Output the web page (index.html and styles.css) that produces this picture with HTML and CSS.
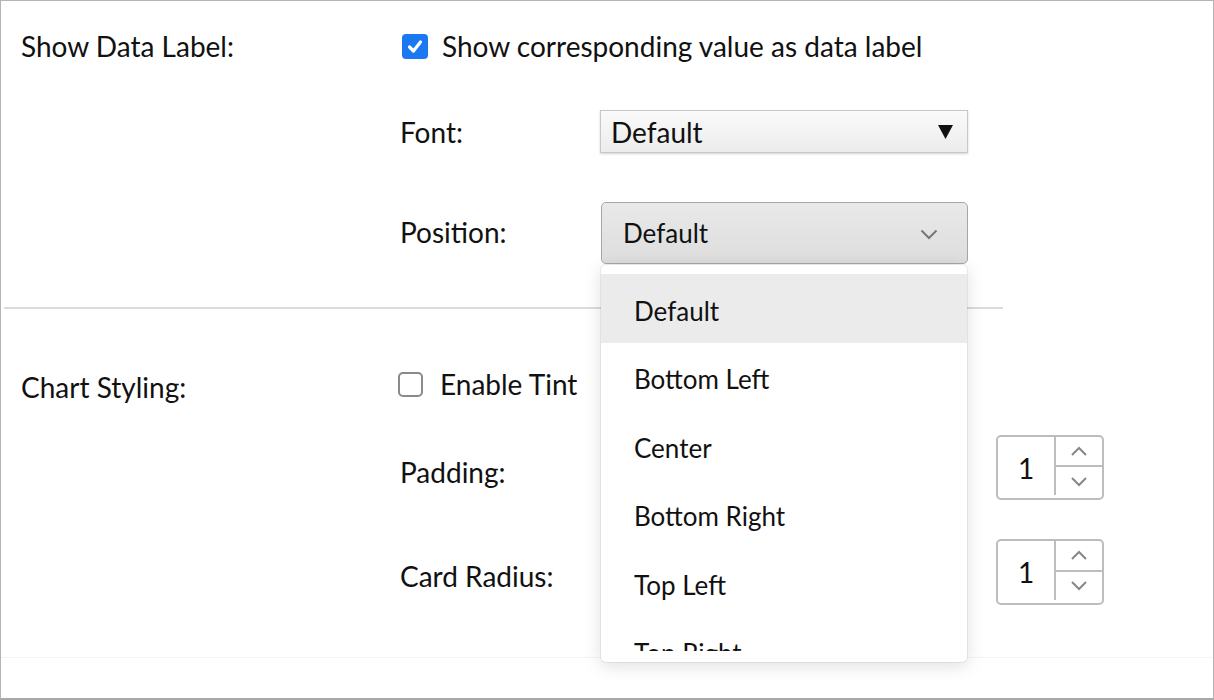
FILE: index.html
```html
<!DOCTYPE html>
<html lang="en">
<head>
<meta charset="utf-8">
<title>Chart settings</title>
<link rel="stylesheet" href="styles.css">
</head>
<body>
<div class="frame">
  <div class="content">
    <div class="section s1">
      <div class="sec-label">Show Data Label:</div>
      <div class="sec-body">
        <div class="check-row checked-row">
          <span class="cb cb-on">
            <svg width="26" height="25" viewBox="0 0 26 25"><rect x="0" y="0" width="26" height="25" rx="4" fill="#1a78f2"/><path d="M7.5 13 L11.5 17 L18.5 8" fill="none" stroke="#fff" stroke-width="3.2" stroke-linecap="round" stroke-linejoin="round"/></svg>
          </span>
          <span class="check-text">Show corresponding value as data label</span>
        </div>
        <div class="field font-field">
          <span class="field-label">Font:</span>
          <div class="legacy-select">
            <span>Default</span>
            <svg class="tri" width="15" height="14" viewBox="0 0 15 14"><polygon points="0,0 15,0 7.5,14" fill="#111"/></svg>
          </div>
        </div>
        <div class="field pos-field">
          <span class="field-label">Position:</span>
          <div class="select-wrap">
            <div class="mac-select">
              <span>Default</span>
              <svg class="chev" width="18" height="11" viewBox="0 0 18 11"><path d="M1.5 1.5 L9 9 L16.5 1.5" fill="none" stroke="#777" stroke-width="2"/></svg>
            </div>
            <div class="menu">
              <div class="menu-list">
                <div class="menu-item active">Default</div>
                <div class="menu-item">Bottom Left</div>
                <div class="menu-item">Center</div>
                <div class="menu-item">Bottom Right</div>
                <div class="menu-item">Top Left</div>
                <div class="menu-item">Top Right</div>
              </div>
            </div>
          </div>
        </div>
      </div>
    </div>
    <div class="divider"></div>
    <div class="section s2">
      <div class="sec-label">Chart Styling:</div>
      <div class="sec-body">
        <div class="check-row tint-row">
          <span class="cb cb-off"></span>
          <span class="check-text">Enable Tint</span>
        </div>
        <div class="field spin-field pad-field">
          <span class="field-label">Padding:</span>
          <div class="spinner">
            <span class="spin-val">1</span>
            <div class="spin-btns">
              <div class="spin-btn"><svg width="18" height="11" viewBox="0 0 18 11"><path d="M2 9 L9 2 L16 9" fill="none" stroke="#888" stroke-width="2"/></svg></div>
              <div class="spin-btn"><svg width="18" height="11" viewBox="0 0 18 11"><path d="M2 2 L9 9 L16 2" fill="none" stroke="#888" stroke-width="2"/></svg></div>
            </div>
          </div>
        </div>
        <div class="field spin-field radius-field">
          <span class="field-label">Card Radius:</span>
          <div class="spinner">
            <span class="spin-val">1</span>
            <div class="spin-btns">
              <div class="spin-btn"><svg width="18" height="11" viewBox="0 0 18 11"><path d="M2 9 L9 2 L16 9" fill="none" stroke="#888" stroke-width="2"/></svg></div>
              <div class="spin-btn"><svg width="18" height="11" viewBox="0 0 18 11"><path d="M2 2 L9 9 L16 2" fill="none" stroke="#888" stroke-width="2"/></svg></div>
            </div>
          </div>
        </div>
      </div>
    </div>
  </div>
  <div class="footer"></div>
</div>
</body>
</html>
```

FILE: styles.css
```css
* { box-sizing: border-box; }
html, body { margin: 0; padding: 0; background: #fff; }
body {
  font-family: Lato, "Open Sans", "Liberation Sans", sans-serif;
  font-size: 28px;
  color: #111;
}
.frame {
  width: 1214px;
  height: 700px;
  border: 1px solid #b4b4b4;
  border-bottom: 2px solid #a8a8a8;
  display: flex;
  flex-direction: column;
  overflow: hidden;
}
.content {
  flex: 1;
  padding-left: 20px;
}
.footer {
  height: 41px;
  border-top: 1px solid #f3f3f3;
}
.section { display: flex; }
.sec-label { width: 381px; flex: none; line-height: 30px; }
.sec-body { display: flex; flex-direction: column; flex: 1; }

.s1 { padding-top: 30px; }
.check-row { height: 30px; display: flex; align-items: center; }
.cb { display: block; flex: none; }
.cb-on { width: 26px; height: 25px; }
.cb-on svg { display: block; }
.checked-row .check-text { margin-left: 14px; }
.cb-off {
  width: 25px; height: 25px;
  border: 2px solid #8a8a8a;
  border-radius: 5px;
  margin-left: -4px;
}
.tint-row .check-text { margin-left: 17px; }

.field { display: flex; align-items: center; }
.field-label { width: 200px; flex: none; margin-left: -2px; }
.font-field { margin-top: 49px; }
.pos-field { margin-top: 49px; }
.pos-field .field-label { margin-top: -3px; }

.legacy-select {
  width: 368px;
  height: 43px;
  display: flex;
  align-items: center;
  justify-content: space-between;
  padding: 0 14px 0 10px;
  background: linear-gradient(to bottom, #fafafa, #ececec);
  border: 1px solid #c8c8c8;
  box-shadow: 0 1px 2px rgba(0,0,0,0.18);
}
.tri { display: block; }

.select-wrap { position: relative; margin-left: 1px; }
.mac-select {
  width: 367px;
  height: 62px;
  display: flex;
  align-items: center;
  justify-content: space-between;
  padding: 0 29px 0 21px;
  font-size: 26px;
  background: linear-gradient(to bottom, #e9e9e9, #dddddd);
  border: 1px solid #a6a6a6;
  border-radius: 5px;
}
.chev { display: block; margin-top: 2px; }

.menu {
  position: absolute;
  top: 63px;
  left: 0;
  width: 366px;
  height: 397px;
  background: #fff;
  border-radius: 5px;
  padding: 9px 0 10px;
  font-size: 26px;
  box-shadow: 0 0 0 1px rgba(0,0,0,0.06), 0 4px 18px rgba(0,0,0,0.13);
  z-index: 10;
}
.menu-list { height: 377px; overflow: hidden; }
.menu-item {
  height: 68.5px;
  padding: 5px 0 0 33px;
  display: flex;
  align-items: center;
}
.menu-item.active { background: #ebebeb; }

.divider {
  height: 2px;
  background: #dcdcdc;
  margin: 43px 0 0 -17px;
  width: 999px;
}
.s2 { margin-top: 60px; }
.s2 .sec-label { padding-top: 3px; }

.spin-field .field-label { width: 596px; padding-top: 8px; }
.pad-field { margin-top: 36px; }
.radius-field { margin-top: 39px; }
.spinner {
  width: 108px;
  height: 65px;
  border: 2px solid #bdbdbd;
  border-radius: 5px;
  display: flex;
}
.radius-field .spinner { height: 66px; }
.spin-val {
  width: 56px;
  display: flex;
  align-items: center;
  justify-content: center;
}
.spin-btns {
  flex: 1;
  display: flex;
  flex-direction: column;
  border-left: 2px solid #bdbdbd;
  margin-bottom: 3px;
}
.spin-btn {
  flex: 1;
  display: flex;
  align-items: center;
  justify-content: center;
}
.spin-btn + .spin-btn { border-top: 2px solid #bdbdbd; }
.spin-btn svg { display: block; }
```
